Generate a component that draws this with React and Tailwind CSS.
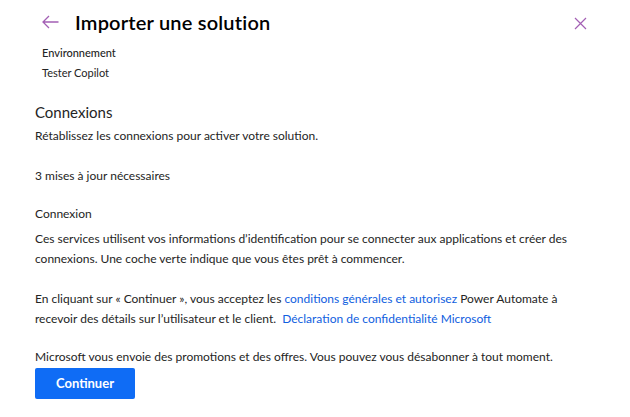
export default function App() {
    return (
        <div className="w-[630px] h-[417px] bg-white overflow-hidden text-[#242424]" style={{ fontFamily: '"Lato", "Open Sans", sans-serif' }}>
            <div className="flex items-center h-[44px] pl-[42px] pr-[42px]">
                <svg width="17" height="14" viewBox="0 0 17 14" className="text-[#a35fb4]">
                    <path d="M7 1L1 7L7 13M1 7H16.5" fill="none" stroke="currentColor" strokeWidth="1.3" />
                </svg>
                <h1 className="ml-[16px] text-[20px] font-semibold text-black tracking-[0.2px]">Importer une solution</h1>
                <svg width="13" height="13" viewBox="0 0 13 13" className="ml-auto mt-[3px] mr-[1px] text-[#a35fb4]">
                    <path d="M1 1L12 12M12 1L1 12" fill="none" stroke="currentColor" strokeWidth="1.2" />
                </svg>
            </div>
            <div className="pl-[42px] text-[11px] leading-[20px] mt-[-1px]">
                <div className="font-medium">Environnement</div>
                <div>Tester Copilot</div>
            </div>
            <div className="pl-[35px] pr-[40px] text-[12px]">
                <h2 className="mt-[18px] text-[15px] leading-[22px]">Connexions</h2>
                <p className="leading-[20px] mt-[3px]">Rétablissez les connexions pour activer votre solution.</p>
                <p className="mt-[20px] leading-[20px]">3 mises à jour nécessaires</p>
                <p className="mt-[18px] leading-[20px]">Connexion</p>
                <p className="mt-[5px] leading-[20px]">
                    Ces services utilisent vos informations d’identification pour se connecter aux applications et créer des connexions. Une coche verte indique que vous êtes prêt à commencer.
                </p>
                <p className="mt-[20px] leading-[20px]">
                    En cliquant sur « Continuer », vous acceptez les <span className="text-[#1060e0]">conditions générales et autorisez</span> Power Automate à recevoir des détails sur l’utilisateur et le client.&nbsp; <span className="text-[#1060e0]">Déclaration de confidentialité Microsoft</span>
                </p>
                <p className="mt-[18px] leading-[20px]">Microsoft vous envoie des promotions et des offres. Vous pouvez vous désabonner à tout moment.</p>
                <button className="mt-[1px] w-[100px] h-[31px] rounded-[2px] bg-[#0f6cf5] text-white text-[13px] font-bold">Continuer</button>
            </div>
        </div>
    );
}
